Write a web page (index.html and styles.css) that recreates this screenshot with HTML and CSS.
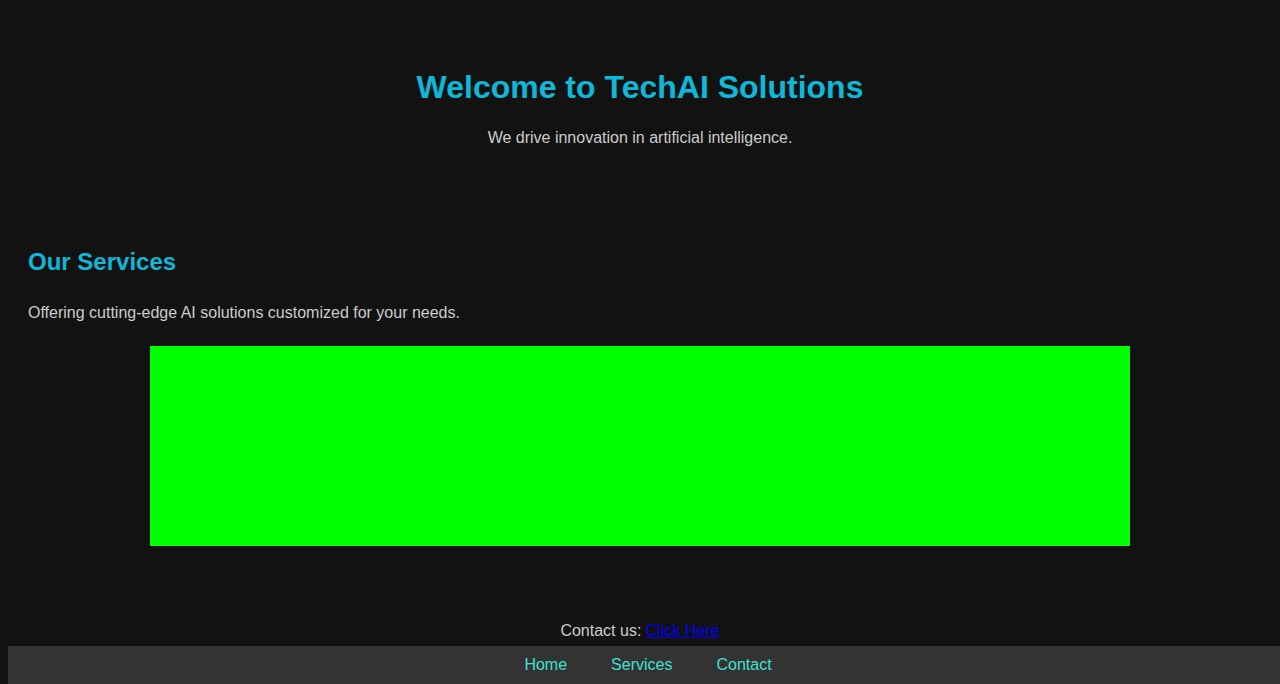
FILE: index.html
```html
<!DOCTYPE html>
<html lang="en">
<head>
<meta charset="utf-8">
<title>TechAI Solutions</title>
<link rel="stylesheet" href="styles.css">
</head>
<body>
<header class="hero">
  <h1 class="hero-title">Welcome to TechAI Solutions</h1>
  <p class="hero-sub">We drive innovation in artificial intelligence.</p>
</header>
<section class="services">
  <h2 class="services-title">Our Services</h2>
  <p class="services-text">Offering cutting-edge AI solutions customized for your needs.</p>
  <div class="showcase"></div>
</section>
<footer class="footer">
  <p class="footer-text">Contact us: <a class="footer-link" href="#">Click Here</a></p>
</footer>
<nav class="bottom-nav">
  <a class="nav-link" href="#">Home</a>
  <a class="nav-link" href="#">Services</a>
  <a class="nav-link" href="#">Contact</a>
</nav>
</body>
</html>
```

FILE: styles.css
```css
html, body {
  background: #121212;
}
body {
  margin: 8px;
  color: #cccccc;
  font-family: "Liberation Sans", Arial, sans-serif;
  font-size: 16px;
}
.hero {
  padding: 40px 20px 45px;
  text-align: center;
}
.hero-title {
  margin: 21.44px 0 22.44px;
  font-size: 32px;
  font-weight: bold;
  color: #0fb8d8;
}
.hero-sub {
  margin: 16px 0;
}
.services {
  padding: 20px 20px 20px;
}
.services-title {
  margin: 19.92px 0 28px;
  font-size: 24px;
  font-weight: bold;
  color: #0fb8d8;
}
.services-text {
  margin: 16px 0 24px;
}
.showcase {
  width: 980px;
  height: 200px;
  margin: 0 auto;
  background: #00ff00;
}
.footer {
  padding: 40px 20px 18px;
  text-align: center;
}
.footer-text {
  margin: 16px 0;
}
.footer-link {
  color: #0000ee;
  text-decoration: underline;
}
.bottom-nav {
  position: fixed;
  left: 8px;
  right: 0;
  bottom: 0;
  display: flex;
  justify-content: center;
  padding: 10px 0 10px 8px;
  background: #333333;
}
.nav-link {
  margin: 0 22px;
  color: #40e0d0;
  text-decoration: none;
  line-height: 18.4px;
}
```
